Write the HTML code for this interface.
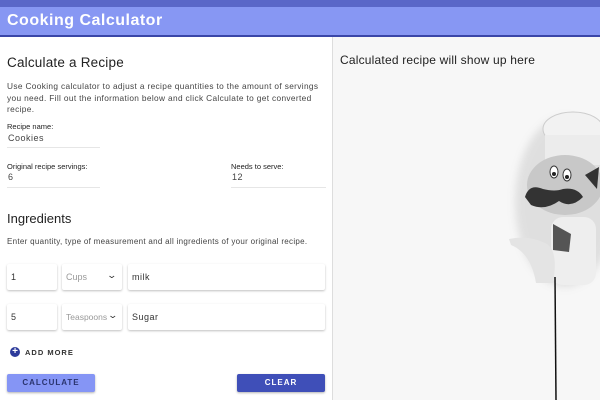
<!DOCTYPE html>
<html><head><style>
body{margin:0;width:600px;height:400px;overflow:hidden;font-family:"Liberation Sans",sans-serif;background:#fff;position:relative}
.top{position:absolute;left:0;top:0;width:600px;height:7px;background:#5a67c8}
.hdr{position:absolute;left:0;top:7px;width:600px;height:28px;background:#8797f3;border-bottom:2px solid #3a46a8}
.hdr span{position:absolute;left:7px;top:5px;color:#fff;font-weight:bold;font-size:16px;letter-spacing:0.5px}
.left{position:absolute;left:0;top:37px;width:332px;height:363px;background:#fff}
.right{position:absolute;left:332px;top:37px;width:268px;height:363px;background:#f7f7f7;border-left:1px solid #ddd}
.a{position:absolute;color:#222;white-space:nowrap}
.line{position:absolute;height:1px;background:#e6e6e6}
.box{position:absolute;background:#fff;box-shadow:0 1px 2px rgba(0,0,0,.25);border-radius:2px;font-size:9px;color:#333;letter-spacing:.5px}
.box span{position:absolute;top:8px;left:4px}
.btn{position:absolute;height:18px;border-radius:2px;font-size:8px;font-weight:bold;letter-spacing:1px;text-align:center;line-height:18px;box-shadow:0 1px 2px rgba(0,0,0,.3)}
</style></head><body>
<div class="top"></div>
<div class="hdr"><span>Cooking Calculator</span></div>
<div class="left">
<div class="a" style="left:7px;top:18px;font-size:13.5px;letter-spacing:.2px">Calculate a Recipe</div>
<div class="a" style="left:7px;top:44px;font-size:8.3px;line-height:11.5px;color:#444;white-space:normal;width:320px;letter-spacing:.35px">Use Cooking calculator to adjust a recipe quantities to the amount of servings you need. Fill out the information below and click Calculate to get converted recipe.</div>
<div class="a" style="left:7px;top:85px;font-size:7.5px">Recipe name:</div>
<div class="a" style="left:8px;top:96px;font-size:9px;color:#444;letter-spacing:.5px">Cookies</div>
<div class="line" style="left:7px;top:110px;width:93px"></div>
<div class="a" style="left:7px;top:125px;font-size:7.5px">Original recipe servings:</div>
<div class="a" style="left:8px;top:135px;font-size:9px;color:#444">6</div>
<div class="line" style="left:7px;top:150px;width:93px"></div>
<div class="a" style="left:231px;top:125px;font-size:7.5px">Needs to serve:</div>
<div class="a" style="left:232px;top:135px;font-size:9px;color:#444;letter-spacing:.5px">12</div>
<div class="line" style="left:231px;top:150px;width:95px"></div>
<div class="a" style="left:7px;top:174px;font-size:13px">Ingredients</div>
<div class="a" style="left:7px;top:200px;font-size:8px;color:#444;letter-spacing:.3px">Enter quantity, type of measurement and all ingredients of your original recipe.</div>
<div class="box" style="left:7px;top:227px;width:50px;height:26px"><span>1</span></div>
<div class="box" style="left:62px;top:227px;width:60px;height:26px;color:#999;letter-spacing:0"><span>Cups</span><b style="position:absolute;right:6px;top:6px;font-weight:normal;color:#333;transform:scaleX(1.4)">⌄</b></div>
<div class="box" style="left:128px;top:227px;width:197px;height:26px"><span>milk</span></div>
<div class="box" style="left:7px;top:267px;width:50px;height:26px"><span>5</span></div>
<div class="box" style="left:62px;top:267px;width:60px;height:26px;color:#999;letter-spacing:0"><span style="font-size:8.5px">Teaspoons</span><b style="position:absolute;right:5px;top:6px;font-weight:normal;color:#333;transform:scaleX(1.4)">⌄</b></div>
<div class="box" style="left:128px;top:267px;width:197px;height:26px"><span>Sugar</span></div>
<div style="position:absolute;left:10px;top:310px;width:10px;height:10px;border-radius:50%;background:#2c3a9a;color:#fff;font-size:10px;line-height:10px;text-align:center;font-weight:bold">+</div>
<div class="a" style="left:25px;top:311px;font-size:7.5px;font-weight:bold;letter-spacing:1px;color:#333">ADD MORE</div>
<div class="btn" style="left:7px;top:337px;width:88px;background:#8595f5;color:#2a336e">CALCULATE</div>
<div class="btn" style="left:237px;top:337px;width:88px;background:#3f4fb8;color:#fff">CLEAR</div>
</div>
<div class="right">
<div class="a" style="left:7px;top:16px;font-size:12px;letter-spacing:.2px">Calculated recipe will show up here</div>
<svg style="position:absolute;left:0;top:0" width="268" height="363">
<defs><filter id="b"><feGaussianBlur stdDeviation="4"/></filter></defs>
<g filter="url(#b)" opacity=".3"><ellipse cx="232" cy="165" rx="50" ry="85" fill="#aaa"/></g>
<ellipse cx="240" cy="92" rx="30" ry="17" fill="#f2f2f2" stroke="#ccc"/>
<rect x="212" y="98" width="56" height="30" fill="#ececec"/>
<ellipse cx="232" cy="148" rx="38" ry="30" fill="#c8c8c8"/>
<ellipse cx="221" cy="135" rx="4" ry="6" fill="#fff" stroke="#333"/><ellipse cx="234" cy="138" rx="4" ry="6" fill="#fff" stroke="#333"/>
<circle cx="221" cy="137" r="2" fill="#222"/><circle cx="234" cy="140" r="2" fill="#222"/>
<path d="M192 160 Q196 146 210 152 Q222 155 230 152 Q244 150 250 160 Q238 172 226 164 Q212 174 198 168 Z" fill="#333"/>
<path d="M252 138 L266 130 L264 152 Z" fill="#333"/>
<rect x="218" y="180" width="45" height="68" rx="12" fill="#eee"/>
<path d="M220 187 L238 197 L236 215 L220 213Z" fill="#555"/>
<path d="M176 202 Q195 198 212 206 Q226 212 220 246 L203 246 Q198 216 178 208 Z" fill="#e4e4e4"/>
<line x1="222" y1="240" x2="223" y2="363" stroke="#111" stroke-width="1.5"/>
</svg>
</div>
</body></html>
